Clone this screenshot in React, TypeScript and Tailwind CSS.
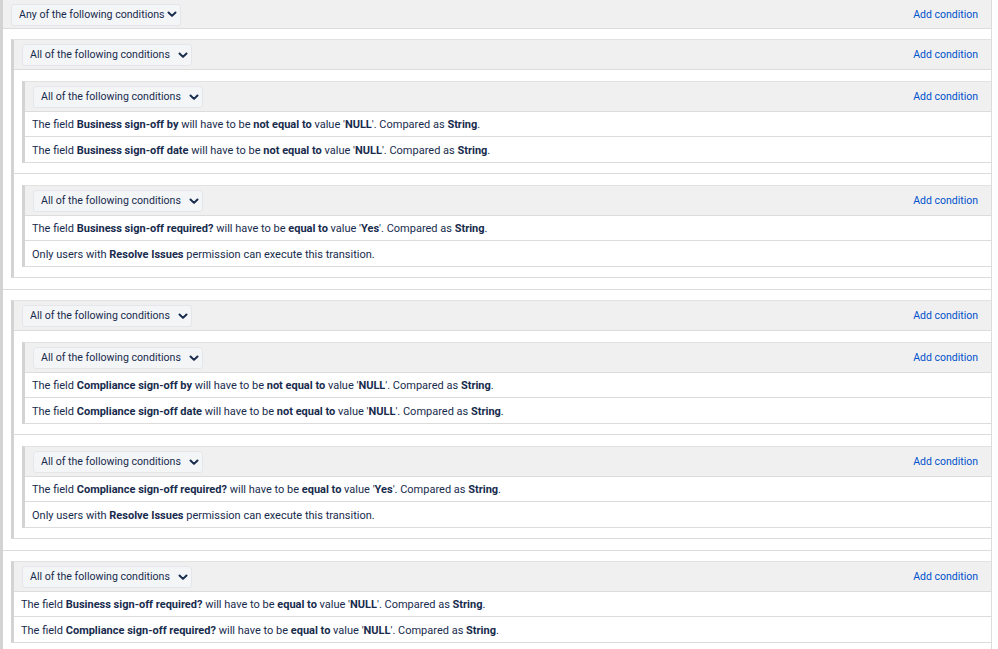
import React from 'react';

type Cond = React.ReactNode;

type Node =
  | { kind: 'cond'; text: Cond }
  | { kind: 'group'; label: string; items: Node[] };

const B = ({ children }: { children: React.ReactNode }) => (
  <span className="font-bold">{children}</span>
);

const fieldCond = (field: string, op: string, value: string): Node => ({
  kind: 'cond',
  text: (
    <>
      The field <B>{field}</B> will have to be <B>{op}</B> value '<B>{value}</B>'. Compared as <B>String</B>.
    </>
  ),
});

const permCond: Node = {
  kind: 'cond',
  text: (
    <>
      Only users with <B>Resolve Issues</B> permission can execute this transition.
    </>
  ),
};

const signOff = (who: string): Node => ({
  kind: 'group',
  label: 'All of the following conditions',
  items: [
    {
      kind: 'group',
      label: 'All of the following conditions',
      items: [
        fieldCond(`${who} sign-off by`, 'not equal to', 'NULL'),
        fieldCond(`${who} sign-off date`, 'not equal to', 'NULL'),
      ],
    },
    {
      kind: 'group',
      label: 'All of the following conditions',
      items: [fieldCond(`${who} sign-off required?`, 'equal to', 'Yes'), permCond],
    },
  ],
});

const tree: Node = {
  kind: 'group',
  label: 'Any of the following conditions',
  items: [
    signOff('Business'),
    signOff('Compliance'),
    {
      kind: 'group',
      label: 'All of the following conditions',
      items: [
        fieldCond('Business sign-off required?', 'equal to', 'NULL'),
        fieldCond('Compliance sign-off required?', 'equal to', 'NULL'),
      ],
    },
  ],
};

function Chevron() {
  return (
    <svg width="10" height="7" viewBox="0 0 10 7" className="shrink-0">
      <path d="M1.5 1.5 L5 4.9 L8.5 1.5" fill="none" stroke="#172b4d" strokeWidth="2" strokeLinecap="round" strokeLinejoin="round" />
    </svg>
  );
}

function Dropdown({ label }: { label: string }) {
  return (
    <div className="flex h-[22px] w-[170px] items-center justify-between whitespace-nowrap rounded-[3px] border border-[#e4e6ea] bg-[#f4f5f7] pl-[7px] pr-[3px] text-[10.6px] text-[#172b4d]">
      <span>{label}</span>
      <Chevron />
    </div>
  );
}

function Group({ node, root = false }: { node: Extract<Node, { kind: 'group' }>; root?: boolean }) {
  return (
    <div className={`border-l-[3px] border-[#d3d3d3] ${root ? '' : 'border-t border-b border-t-[#e2e2e2] border-b-[#dcdcdc]'}`}>
      <div className={`flex items-center justify-between border-b border-[#dcdcdc] bg-[#f0f0f0] pl-[8px] pr-[13px] ${root ? 'h-[29px] pt-[1px]' : 'h-[30px] pt-[1px]'}`}>
        <Dropdown label={node.label} />
        <a className="text-[10.5px] text-[#0052cc]">Add condition</a>
      </div>
      {node.items.map((item, i) => {
        const last = i === node.items.length - 1;
        if (item.kind === 'cond') {
          return (
            <div
              key={i}
              className={`flex h-[25px] items-center whitespace-nowrap pl-[7px] pt-[3px] text-[11px] text-[#172b4d] ${last ? '' : 'border-b border-[#dcdcdc]'}`}
            >
              <span>{item.text}</span>
            </div>
          );
        }
        return (
          <div
            key={i}
            className={`pl-[8px] ${root ? 'pt-[10px] pb-[11px]' : 'pt-[11px] pb-[10px]'} ${last && !root ? '' : 'border-b border-[#dcdcdc]'}`}
          >
            <Group node={item} />
          </div>
        );
      })}
    </div>
  );
}

export default function App() {
  return (
    <div className="h-[649px] w-[998px] overflow-hidden bg-white font-['Roboto','Liberation_Sans',sans-serif]">
      <div className="w-[992px] border-r border-[#dcdcdc]">
        <Group node={tree as Extract<Node, { kind: 'group' }>} root />
      </div>
    </div>
  );
}
